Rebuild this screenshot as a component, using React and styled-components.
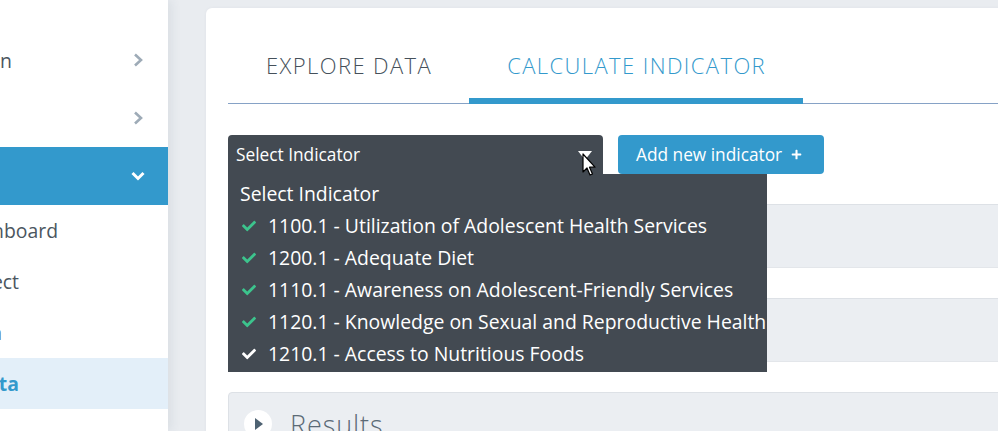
import styled, { createGlobalStyle } from "styled-components";
import { FaCheck, FaPlus } from "react-icons/fa";

const GlobalStyle = createGlobalStyle`
  html, body {
    margin: 0;
    padding: 0;
    overflow: hidden;
    background: #e9ecf0;
    font-family: "Open Sans", "Noto Sans", sans-serif;
  }
`;

// the sidebar is scrolled sideways, so each label is placed by where it ends
const menu = [
  { label: "Administration", end: 12, chevron: "right" },
  { label: "Reports", end: 0, chevron: "right" },
  { label: "Indicators", end: 0, chevron: "down", active: true },
];

const subMenu = [
  { label: "Dashboard", end: 58 },
  { label: "Select", end: 19 },
  { label: "Data", end: 2 },
  { label: "Indicator Data", end: 19, active: true },
];

const options = [
  { label: "1100.1 - Utilization of Adolescent Health Services" },
  { label: "1200.1 - Adequate Diet" },
  { label: "1110.1 - Awareness on Adolescent-Friendly Services" },
  { label: "1120.1 - Knowledge on Sexual and Reproductive Health" },
  { label: "1210.1 - Access to Nutritious Foods", current: true },
];

const ChevronRight = () => (
  <svg width="10" height="14" viewBox="0 0 10 14">
    <polyline points="2,1.5 8,7 2,12.5" fill="none" stroke="#9eabb7" strokeWidth="2.6" />
  </svg>
);

const ChevronDown = () => (
  <svg width="14" height="10" viewBox="0 0 14 10">
    <polyline points="1.5,2 7,7.5 12.5,2" fill="none" stroke="#ffffff" strokeWidth="3" />
  </svg>
);

const Cursor = () => (
  <svg width="14" height="23" viewBox="0 0 14 23">
    <path
      d="M1 1 L1 19 L5 15 L8 22 L10.5 21 L7.5 14.2 L13 14.2 Z"
      fill="#ffffff"
      stroke="#000000"
      strokeWidth="1.2"
      strokeLinejoin="round"
    />
  </svg>
);

const App = () => {
  return (
    <>
      <GlobalStyle />
      <Layout>
        <Sidebar>
          {menu.map((item) => (
            <MenuItem key={item.label} $active={item.active}>
              <MenuLabel style={{ width: item.end }}>
                <span>{item.label}</span>
              </MenuLabel>
              {item.chevron === "down" ? <ChevronDown /> : <ChevronRight />}
            </MenuItem>
          ))}
          {subMenu.map((item) => (
            <SubItem key={item.label} $active={item.active}>
              <MenuLabel style={{ width: item.end }}>
                <span>{item.label}</span>
              </MenuLabel>
            </SubItem>
          ))}
        </Sidebar>

        <Main>
          <Card>
            <TabBar>
              <Tab>EXPLORE DATA</Tab>
              <Tab $active>CALCULATE INDICATOR</Tab>
            </TabBar>

            <Toolbar>
              <SelectWrap>
                <SelectBox>
                  <span>Select Indicator</span>
                  <Caret />
                </SelectBox>
                <Options>
                  <Option>Select Indicator</Option>
                  {options.map((opt) => (
                    <Option key={opt.label}>
                      <CheckMark $current={opt.current}>
                        <FaCheck size={14} />
                      </CheckMark>
                      {opt.label}
                    </Option>
                  ))}
                </Options>
                <Pointer>
                  <Cursor />
                </Pointer>
              </SelectWrap>
              <AddButton>
                Add new indicator
                <FaPlus size={11} />
              </AddButton>
            </Toolbar>

            <Panel />
            <Panel />
            <ResultsPanel>
              <PlayCircle>
                <svg width="10" height="12" viewBox="0 0 10 12">
                  <polygon points="1,0 9,6 1,12" fill="#4e6272" />
                </svg>
              </PlayCircle>
              <ResultsTitle>Results</ResultsTitle>
            </ResultsPanel>
          </Card>
        </Main>
      </Layout>
    </>
  );
};

const Layout = styled.div`
  display: flex;
  height: 100vh;
  overflow: hidden;
`;

const Sidebar = styled.nav`
  position: relative;
  z-index: 2;
  flex: 0 0 168px;
  width: 168px;
  padding-top: 31px;
  background: #ffffff;
  overflow: hidden;
  box-shadow: 3px 0 10px rgba(60, 75, 95, 0.09);
`;

const MenuItem = styled.div`
  display: flex;
  align-items: center;
  justify-content: space-between;
  height: 58px;
  padding-right: ${(p) => (p.$active ? "23px" : "25px")};
  background: ${(p) => (p.$active ? "#3399cc" : "transparent")};
  color: ${(p) => (p.$active ? "#ffffff" : "#4b5660")};
  font-size: 19.4px;
`;

const SubItem = styled.div`
  display: flex;
  align-items: center;
  height: 51px;
  background: ${(p) => (p.$active ? "#e3eff9" : "transparent")};
  color: ${(p) => (p.$active ? "#3399cc" : "#4b5660")};
  font-weight: ${(p) => (p.$active ? 700 : 400)};
  font-size: 19.4px;
`;

const MenuLabel = styled.div`
  display: flex;
  justify-content: flex-end;
  flex: none;
  white-space: nowrap;
`;

const Main = styled.main`
  flex: 1;
  padding: 8px 0 0 38px;
  min-width: 0;
`;

const Card = styled.section`
  width: 900px;
  height: 600px;
  padding: 0 0 0 22px;
  background: #ffffff;
  border-radius: 6px 0 0 0;
  box-shadow: 0 0 3px rgba(60, 75, 95, 0.06);
`;

const TabBar = styled.div`
  display: flex;
  border-bottom: 1px solid #86a2c6;
`;

const Tab = styled.div`
  padding: 42px 37px 18px 38px;
  line-height: 30px;
  font-family: "Open Sans", sans-serif;
  font-size: 22px;
  font-weight: 300;
  letter-spacing: 1.4px;
  color: ${(p) => (p.$active ? "#3399cc" : "#45505a")};
  border-bottom: 6px solid ${(p) => (p.$active ? "#3399cc" : "transparent")};
  margin-bottom: -1px;
`;

const Toolbar = styled.div`
  display: flex;
  gap: 15px;
  margin-top: 31px;
`;

const SelectWrap = styled.div`
  position: relative;
  z-index: 3;
`;

const SelectBox = styled.div`
  display: flex;
  align-items: center;
  justify-content: space-between;
  width: 375px;
  height: 39px;
  box-sizing: border-box;
  padding: 0 11px 0 8px;
  background: #434a52;
  border-radius: 4px 4px 0 0;
  color: #ffffff;
  font-size: 17.3px;
`;

const Caret = styled.span`
  width: 0;
  height: 0;
  margin-top: 2px;
  border-left: 7px solid transparent;
  border-right: 7px solid transparent;
  border-top: 9px solid #ffffff;
`;

const Options = styled.ul`
  position: absolute;
  top: 39px;
  left: 0;
  width: 539px;
  margin: 0;
  padding: 3px 0;
  list-style: none;
  background: #434a52;
  color: #ffffff;
  font-size: 19.4px;
`;

const Option = styled.li`
  display: flex;
  align-items: center;
  height: 32px;
  padding-left: 12px;
  white-space: nowrap;
`;

const CheckMark = styled.span`
  display: inline-flex;
  margin: 1px 12px 0 2px;
  color: ${(p) => (p.$current ? "#ffffff" : "#3cc48d")};
`;

const Pointer = styled.div`
  position: absolute;
  left: 354px;
  top: 18px;
  pointer-events: none;
`;

const AddButton = styled.button`
  display: flex;
  align-items: center;
  gap: 9px;
  height: 39px;
  padding: 0 22px 0 18px;
  border: none;
  border-radius: 4px;
  background: #3399cc;
  color: #ffffff;
  font-family: "Open Sans", sans-serif;
  font-size: 17.3px;
`;

const Panel = styled.div`
  height: 62px;
  margin-top: 30px;
  background: #ebeef2;
  border-top: 1px solid #dde1e6;
  border-bottom: 1px solid #e3e6ea;
`;

const ResultsPanel = styled.div`
  display: flex;
  align-items: center;
  gap: 18px;
  height: 62px;
  margin-top: 30px;
  padding-left: 15px;
  background: #ebeef2;
  border: 1px solid #dde1e6;
  border-radius: 4px 0 0 0;
`;

const PlayCircle = styled.span`
  display: flex;
  align-items: center;
  justify-content: center;
  width: 28px;
  height: 28px;
  padding-left: 2px;
  box-sizing: border-box;
  border-radius: 50%;
  background: #ffffff;
`;

const ResultsTitle = styled.span`
  font-size: 27px;
  font-weight: 300;
  letter-spacing: 0.9px;
  color: #5b6a76;
`;

export default App;
